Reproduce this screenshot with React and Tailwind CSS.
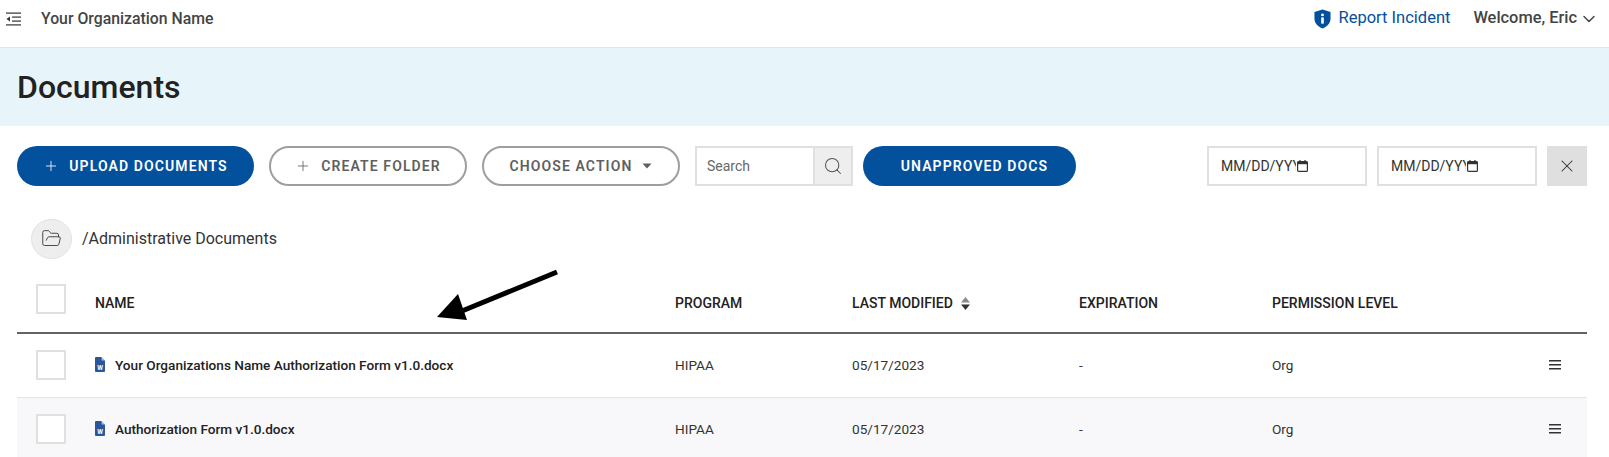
import React from "react";
import { Plus, Search, X, FolderOpen, ChevronDown } from "lucide-react";

function Shield() {
  return (
    <svg width="17" height="20" viewBox="0 0 18 21" className="shrink-0">
      <path d="M9 0.5 L17.5 3 V10 C17.5 15 14 18.5 9 20.5 C4 18.5 0.5 15 0.5 10 V3 Z" fill="#03509c" />
      <circle cx="9" cy="6.2" r="1.5" fill="#fff" />
      <rect x="7.6" y="8.8" width="2.8" height="6.6" fill="#fff" />
    </svg>
  );
}

function MenuCollapse() {
  return (
    <svg width="15" height="14" viewBox="0 0 15 14" className="shrink-0">
      <rect x="0" y="0.5" width="15" height="1.2" fill="#333" />
      <rect x="6" y="4.5" width="9" height="1.2" fill="#333" />
      <rect x="6" y="8.5" width="9" height="1.2" fill="#333" />
      <rect x="0" y="12.3" width="15" height="1.2" fill="#333" />
      <path d="M4 4.5 L0.5 7 L4 9.5 Z" fill="#333" />
    </svg>
  );
}

function WordIcon() {
  return (
    <svg width="10" height="15" viewBox="0 0 10 15" className="shrink-0">
      <path d="M0 1 Q0 0 1 0 H6.2 L10 3.8 V14 Q10 15 9 15 H1 Q0 15 0 14 Z" fill="#2b579a" />
      <path d="M6.6 0 L10 3.4 H6.6 Z" fill="#a9bcd9" />
      <text x="5" y="12.5" textAnchor="middle" fontSize="6.5" fontWeight="700" fill="#fff" fontFamily="Roboto, sans-serif">W</text>
    </svg>
  );
}

function Burger() {
  return (
    <svg width="12" height="10" viewBox="0 0 12 10" className="shrink-0">
      <rect y="0" width="12" height="1.5" fill="#333" />
      <rect y="4" width="12" height="1.5" fill="#333" />
      <rect y="8" width="12" height="1.5" fill="#333" />
    </svg>
  );
}

function SortIcon() {
  return (
    <svg width="9" height="13" viewBox="0 0 9 13" className="shrink-0">
      <path d="M4.5 0 L9 5.5 H0 Z" fill="#8a8a8a" />
      <path d="M4.5 13 L9 7.5 H0 Z" fill="#333" />
    </svg>
  );
}

function Calendar() {
  return (
    <svg width="11" height="12" viewBox="0 0 11 12" className="shrink-0">
      <rect x="0.6" y="1.6" width="9.8" height="9.8" rx="1" fill="none" stroke="#333" strokeWidth="1.2" />
      <rect x="0.6" y="1.6" width="9.8" height="2.6" fill="#333" />
      <rect x="2.4" y="0" width="1.2" height="2" fill="#333" />
      <rect x="7.4" y="0" width="1.2" height="2" fill="#333" />
    </svg>
  );
}

function DateField() {
  return (
    <div className="w-[160px] h-10 border-2 border-[#e0e0e0] bg-white flex items-center pl-[12px] gap-[1px] text-[14px] text-[#333] overflow-hidden">
      <span className="w-[75px] overflow-hidden whitespace-nowrap">MM/DD/YYYY</span>
      <Calendar />
    </div>
  );
}

function Checkbox() {
  return <div className="w-[30px] h-[30px] border-2 border-[#e0e0e0] bg-white shrink-0" />;
}

const gridCols = "grid grid-cols-[78px_580px_177px_227px_193px_1fr] items-center";

function Row({ name, shaded }) {
  return (
    <div className={`${gridCols} h-[64px] pb-[1px] border-b border-[#e4e4e6] text-[13.6px] text-[#333] ${shaded ? "bg-[#f8f8fa]" : "bg-white"}`}>
      <div className="pl-[19px]"><Checkbox /></div>
      <div className="flex items-center gap-[10px] font-medium text-[#222]">
        <WordIcon />
        <span>{name}</span>
      </div>
      <div>HIPAA</div>
      <div>05/17/2023</div>
      <div>-</div>
      <div className="flex items-center justify-between pr-[26px]">
        <span>Org</span>
        <Burger />
      </div>
    </div>
  );
}

export default function App() {
  return (
    <div className="relative h-[457px] overflow-hidden bg-white font-['Roboto',sans-serif]">
      <header className="h-[48px] border-b border-[#e2e6e9] flex items-start justify-between pt-[7px] pl-[6px] pr-[10px]">
        <div className="flex items-center gap-[20px] h-[21px] mt-[1px]">
          <MenuCollapse />
          <span className="text-[15.8px] font-medium text-[#444]">Your Organization Name</span>
        </div>
        <div className="flex items-center h-[21px] mt-[1px]">
          <Shield />
          <span className="ml-[8px] text-[16.5px] text-[#03509c]">Report Incident</span>
          <span className="ml-[23px] text-[16.4px] font-medium text-[#444]">Welcome, Eric</span>
          <ChevronDown size={20} strokeWidth={1.75} className="ml-[2px] text-[#444]" />
        </div>
      </header>

      <section className="h-[78px] bg-[#e7f5fb] flex items-center pl-[17px]">
        <h1 className="text-[32px] font-medium text-[#222]">Documents</h1>
      </section>

      <div className="flex items-center h-10 mt-5 pl-[17px] pr-[22px]">
        <button className="w-[237px] h-10 rounded-full bg-[#03509c] text-white flex items-center justify-center gap-[10px] text-[14px] font-semibold tracking-[1.1px]">
          <Plus size={16} strokeWidth={1.25} />
          UPLOAD DOCUMENTS
        </button>
        <button className="ml-[15px] w-[198px] h-10 rounded-full border-2 border-[#9e9e9e] text-[#5f5f5f] flex items-center justify-center gap-[10px] text-[14px] font-semibold tracking-[1.1px]">
          <Plus size={16} strokeWidth={1.25} />
          CREATE FOLDER
        </button>
        <button className="ml-[15px] w-[198px] h-10 rounded-full border-2 border-[#9e9e9e] text-[#5f5f5f] flex items-center justify-center gap-[10px] text-[14px] font-semibold tracking-[1.1px]">
          CHOOSE ACTION
          <svg width="10" height="6" viewBox="0 0 10 6"><path d="M0.5 0.5 H9.5 L5 5.5 Z" fill="#5f5f5f" /></svg>
        </button>
        <div className="ml-[15px] w-[158px] h-10 border-2 border-[#e0e0e0] flex">
          <div className="flex-1 flex items-center pl-[10px] text-[14px] text-[#666]">Search</div>
          <div className="w-[38px] bg-[#eeeeee] border-l-2 border-[#e0e0e0] flex items-center justify-center">
            <Search size={20} strokeWidth={1.25} className="text-[#555]" />
          </div>
        </div>
        <button className="ml-[10px] w-[213px] h-10 pl-[10px] rounded-full bg-[#03509c] text-white text-[14px] font-semibold tracking-[1.1px]">
          UNAPPROVED DOCS
        </button>
        <div className="ml-auto flex items-center gap-[10px]">
          <DateField />
          <DateField />
          <div className="w-10 h-10 bg-[#dfdfdf] flex items-center justify-center">
            <X size={20} strokeWidth={1.25} className="text-[#333]" />
          </div>
        </div>
      </div>

      <div className="flex items-center mt-[32px] pl-[31px] h-[41px]">
        <div className="w-[41px] h-[40px] rounded-full bg-[#eeeeee] border border-[#e2e2e2] flex items-center justify-center">
          <FolderOpen size={21} strokeWidth={1} className="text-[#333]" />
        </div>
        <span className="ml-[10px] text-[16px] text-[#333]">/Administrative Documents</span>
      </div>

      <div className="ml-[17px] mr-[22px] mt-[19px]">
        <div className={`${gridCols} h-[56px] pb-[4px] border-b-2 border-[#636363] text-[14px] font-medium text-[#222]`}>
          <div className="pl-[19px] mb-[8px]"><Checkbox /></div>
          <div>NAME</div>
          <div>PROGRAM</div>
          <div className="flex items-center gap-[8px]">LAST MODIFIED <SortIcon /></div>
          <div>EXPIRATION</div>
          <div>PERMISSION LEVEL</div>
        </div>
        <Row name="Your Organizations Name Authorization Form v1.0.docx" />
        <Row name="Authorization Form v1.0.docx" shaded />
      </div>

      <svg className="absolute left-[430px] top-[268px]" width="135" height="58" viewBox="0 0 135 58">
        <path d="M127 4 L32 43" stroke="#000" strokeWidth="5" fill="none" />
        <path d="M7 49 L28 26 L37 52 Z" fill="#000" />
      </svg>
    </div>
  );
}
